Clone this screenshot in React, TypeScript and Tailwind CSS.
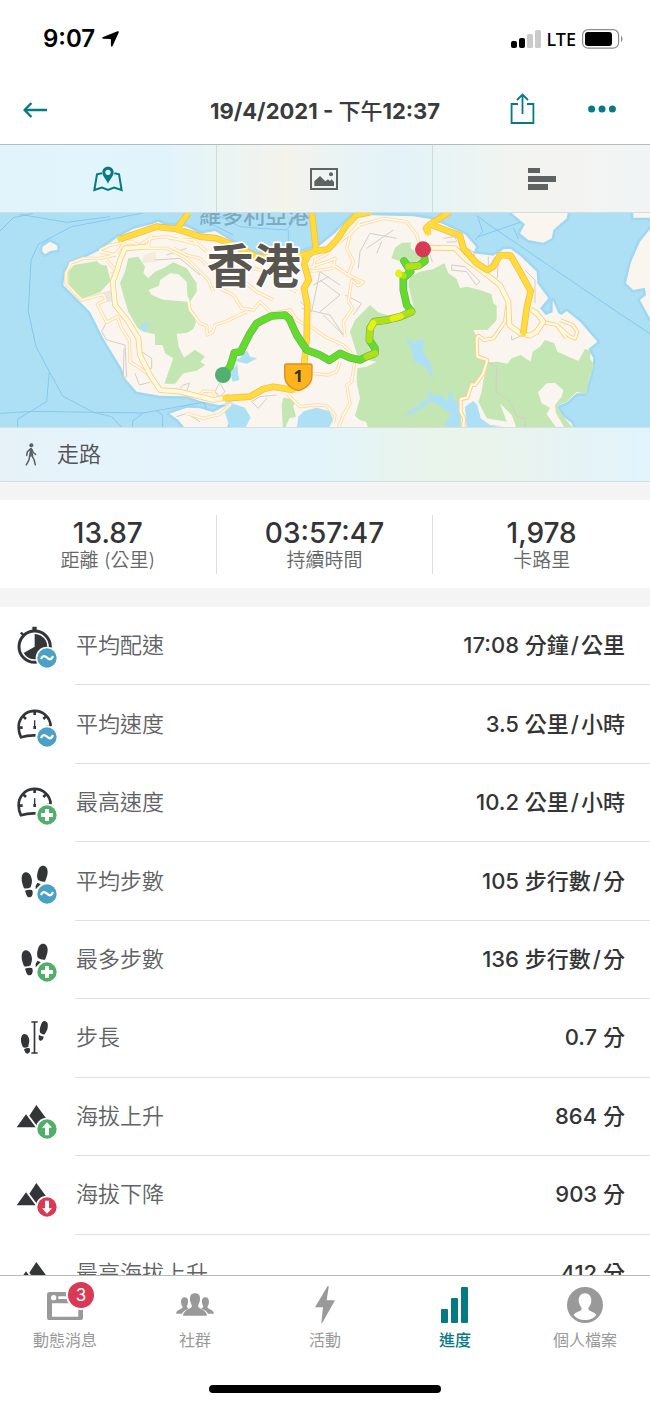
import { Fragment } from 'react'
import type { ReactNode } from 'react'

const INK = '#333638'

const LAND =
  'M210 175 250 160 300 135 355 95 400 72 455 58 475 50 495 60 560 65 600 86 645 78 700 112 760 150 900 142 955 125 1005 85 1040 48 1068 24 1080 30 1240 34 1290 42 1330 58 1395 88 1428 125 1420 145 1480 152 1512 132 1532 132 1560 152 1610 200 1612 235 1645 280 1620 310 1637 330 1658 322 1658 286 1675 325 1685 330 1700 318 1740 350 1792 410 1765 432 1780 460 1772 510 1755 565 1730 565 1700 592 1670 604 1690 635 1715 655 1720 670 700 670 680 640 690 600 655 600 600 588 560 574 480 572 410 560 375 520 365 490 310 400 270 320 240 290 190 240 195 200Z'

const PARKS = [
  'M205 200 222 180 270 172 290 168 300 178 320 182 332 228 300 262 250 280 225 265 205 240Z',
  'M385 160 415 155 435 185 430 205 445 220 465 200 490 190 520 172 560 190 590 235 590 260 570 290 562 270 560 230 535 207 510 205 480 225 477 242 445 255 455 270 490 284 560 290 580 320 588 352 580 372 560 384 530 386 536 425 552 458 585 434 615 455 600 470 615 480 590 497 550 505 525 536 493 536 520 460 495 445 488 420 465 420 465 388 430 380 412 368 385 320 370 270 360 235 375 200Z',
  'M1174 160 1185 128 1205 114 1232 112 1232 130 1272 155 1240 175 1200 168Z',
  'M1225 240 1230 215 1260 200 1300 192 1333 175 1345 205 1370 222 1380 250 1400 245 1440 255 1475 268 1480 295 1490 302 1490 345 1462 375 1420 375 1430 395 1432 455 1465 470 1450 510 1420 545 1398 578 1380 582 1385 670 1105 670 1098 650 1080 646 1065 632 1080 580 1070 530 1072 490 1100 485 1130 470 1075 460 1050 380 1065 345 1110 300 1135 322 1160 330 1185 342 1220 335 1242 310Z',
  'M1465 472 1490 470 1522 476 1535 460 1562 450 1592 470 1598 440 1620 425 1635 405 1663 415 1672 440 1735 468 1755 432 1772 438 1770 460 1782 482 1765 530 1760 568 1730 560 1700 590 1670 602 1690 635 1720 670 1550 670 1535 630 1500 595 1520 650 1460 640 1435 590 1445 560 1450 525Z',
  'M845 600 850 578 885 582 880 605 888 635 868 640 855 670 848 665Z',
]

const WATER = [
  'M418 362 430 357 452 352 442 364 438 382 422 372Z',
  'M700 465 720 460 732 440 742 438 750 455 772 460 740 476 715 470Z',
  'M690 500 712 478 714 505 718 525 698 530Z',
  'M674 620 700 596 735 608 752 638 735 670 690 670Z',
  'M895 635 912 618 950 608 988 618 1000 645 985 670 890 670Z',
  'M1215 402 1232 405 1240 418 1252 404 1272 406 1268 440 1292 475 1298 510 1302 530 1290 505 1268 480 1242 470 1235 435Z',
  'M1214 637 1235 610 1262 602 1258 580 1266 592 1282 584 1290 552 1300 575 1322 568 1340 590 1352 555 1362 585 1380 600 1380 670 1330 660 1355 630 1315 598 1290 592 1262 612Z',
  'M1395 605 1420 588 1432 600 1442 640 1470 660 1510 664 1400 670Z',
]

const SMALL_ROADS = [
  'M300 135 330 120 360 115 380 110 420 120 450 100 500 95 560 110 600 120',
  'M210 175 250 160 300 160 345 150 370 118 400 110 M300 140 350 150 M320 165 350 200 330 210',
  'M210 180 198 205 198 235 245 285 310 268 318 285 292 298 320 352 352 335 365 370 388 405 390 470 450 510 480 555',
  'M375 105 420 120 450 130 500 130 520 140 560 160 600 200 625 225 640 260',
  'M455 90 445 120 M520 130 560 150 600 160 640 200 M505 100 580 105 620 140',
  'M640 240 700 270 725 310 760 315 780 290 815 325 870 315 890 345 940 370 975 395 1030 420 1055 445',
  'M565 290 570 315 600 355 620 362 622 390 638 382 645 360 680 348 740 320',
  'M630 195 680 215 700 240 740 235 770 260 820 285 M700 130 760 190 800 200 850 240 890 260',
  'M920 190 980 170 1005 160 1000 190 925 200 M940 190 945 165 985 145',
  'M1000 180 1045 210 1090 232 1075 242 1055 226 1045 290 1058 310 1030 350 1035 395',
  'M1080 50 1050 90 1040 130 1060 170 1045 210 M1020 110 1080 60 1150 40 1220 50 1250 90 1260 125',
  'M935 505 985 510 1010 500 1020 470 M1065 465 1055 530 1040 540 1050 595 1030 630 1015 670',
  'M860 565 900 605 950 600 980 602 1005 630 1000 655',
  'M560 625 610 640 660 628 690 600 M600 570 610 558 640 560 650 580',
]

const MAIN_ROADS = [
  'M440 125 375 130 360 165 350 200 338 230 345 300 385 350 415 400 420 450 450 510 480 555 540 560 640 585 690 575',
  'M1290 128 1365 130 1400 165 1455 205 1500 240 1525 290 1528 360 1560 385 1590 392 1610 380 1630 350 1610 325 1592 312',
]

const SIDE_ROADS = [
  'M1522 300 1515 350 1480 400 1452 405 1435 392 1430 400 1432 455 1462 465 1450 505 1425 540 1415 538 1402 578 1382 582 1382 620 1392 640 1390 670',
  'M1630 352 1670 360 1710 395 1725 400 1732 380 1718 360 1680 345 M1670 360 1700 400',
]

const HIGHWAYS = [
  'M360 102 420 82 470 65 530 72 600 95 650 100 700 120 770 155 860 160 910 150 940 140 985 132 1010 105 1040 60 1070 30',
  'M935 20 942 80 948 135 925 150 912 175 926 225 912 250 922 300 920 400 912 480',
  'M1350 20 1290 58 1380 92 1390 130 1430 175 1462 195 1480 185 1500 150 1532 152 1560 200 1592 258 1580 310 1570 385',
  'M675 580 750 575 790 552 820 545 880 555',
  'M1290 58 1278 70 1285 84 M1070 30 1110 22 M530 72 565 24',
]

const PATHS =
  'M465 165 540 160 600 210 M500 150 560 130 M900 290 935 320 960 200 1020 240 M905 310 990 330 1030 390 M960 320 1020 270 960 225 M940 240 985 215 M1075 190 1080 140 1110 85 1190 100 M1100 130 1180 75 M1145 110 1130 145 M1035 270 1085 295 1060 330 M970 330 1035 395 M305 380 320 405 375 420 380 515 370 520 372 430 M305 380 320 350 M425 440 455 460 455 490 440 490 M405 505 418 540 450 532 M540 550 550 540 568 535 560 560 M658 535 645 560 660 575 675 560 660 535 M755 590 780 575 830 570 M755 590 775 610 800 580 M1290 150 1297 170 M1355 180 1395 185 1440 230 1428 240 1400 200 1355 195 1355 180 M1465 155 1465 190 1485 155 M1495 160 1492 220 M1575 195 1605 225 1605 295 M1535 392 1535 405 1570 390 M1460 470 1490 485 1488 560 1530 590 1550 635 1575 640 1575 670 M530 635 560 625 600 650 M1400 130 1420 140 1425 160 M1330 100 1365 95 1370 110 1340 112'

const FERRIES =
  'M0 78 40 38 100 25 M60 28 200 52 330 35 M430 24 215 65 115 118 93 165 85 320 108 425 148 500 188 573 280 622 335 635 368 670 M148 500 140 590 53 642 53 670 M0 625 100 619 430 624 620 590 M430 624 398 648 398 670 M470 618 488 630 488 670 M600 40 700 90 M640 24 720 65 780 70 860 75 900 24 M865 75 865 130 M1430 32 1480 68 1850 320 1950 386 M1435 40 1448 80 1425 105 M1435 95 1560 52 M1540 68 1555 102 M610 590 620 615'

const ROUTE =
  'M68 510 90 485 98 460 103 443 122 440 150 385 170 355 195 342 215 333 255 330 268 342 290 390 320 435 360 450 388 466 420 445 450 458 480 465 500 455 525 445 525 430 508 405 510 370 522 350 560 345 600 335 635 320 620 300 610 255 610 220 632 200 612 168 625 185 655 182 675 168 670 133'

function Casing({ roads, width, edge, fill }: { roads: string[]; width: number; edge: string; fill: string }) {
  return (
    <g fill="none" strokeLinejoin="round">
      <path d={roads.join(' ')} stroke={edge} strokeWidth={width + 5} />
      <path d={roads.join(' ')} stroke={fill} strokeWidth={width} strokeLinecap="square" />
    </g>
  )
}

function RouteMap() {
  return (
    <svg viewBox="0 24 1950 642" className="block w-full bg-[#ade0f5]" role="img" aria-label="香港">
      <path d={FERRIES} fill="none" stroke="#86c8f2" strokeWidth="3" />
      <g fill="#faf5ef" stroke="#8fcdeb" strokeOpacity=".4" strokeWidth="16" strokeLinejoin="round" paintOrder="stroke">
        <path d={LAND} />
        <path d="M128 125 150 110 172 122 172 134 150 138 135 148 126 138Z" />
        <path d="M508 626 560 608 600 610 640 622 690 595 700 615 680 670 555 670 535 645Z" />
        <path d="M1535 24 1575 58 1560 85 1585 105 1630 113 1655 100 1660 75 1700 40 1705 15 1540 15Z" />
        <path d="M1900 15 1900 38 1950 38 1960 60 1920 110 1900 155 1892 175 1878 235 1900 255 1935 248 1938 270 1920 285 1950 340 1970 340 1970 15Z" />
      </g>
      <path d="M430 150 468 138 468 170 425 175Z" fill="#f5ecdc" />
      <path d="M310 262 335 255 345 290 318 290Z" fill="#e9e7e6" />
      <g fill="#c3e6b2">
        {PARKS.map((d) => (
          <path key={d} d={d} />
        ))}
      </g>
      <path
        d="M1640 535 1665 534 1690 555 1685 575 1665 600 1668 625 1695 670 1670 670 1640 628 1650 608 1625 595 1614 562Z"
        fill="#faf5ef"
      />
      <g fill="#ade0f5">
        {WATER.map((d) => (
          <path key={d} d={d} />
        ))}
      </g>
      <path d={PATHS} fill="none" stroke="#d3cec8" strokeWidth="3" />
      <Casing roads={SMALL_ROADS} width={5} edge="#fbd9b0" fill="#fffbdc" />
      <Casing roads={SIDE_ROADS} width={7} edge="#fac996" fill="#fffbd6" />
      <Casing roads={MAIN_ROADS} width={12} edge="#fac996" fill="#fffbd6" />
      <Casing roads={HIGHWAYS} width={15} edge="#f9b95c" fill="#ffdd38" />

      <g className="font-['Noto_Sans_CJK_TC',sans-serif]" paintOrder="stroke" strokeLinejoin="round">
        <text x="598" y="55" fontSize="66" fontWeight="500" fill="#7eabc0">
          維多利亞港
        </text>
        <text x="620" y="233" fontSize="141" fontWeight="700" fill="#59554f" stroke="#fff" strokeWidth="10">
          香港
        </text>
      </g>

      <g transform="translate(600 0)" fill="none" strokeLinejoin="round" strokeLinecap="round">
        <path d={ROUTE} stroke="#79a860" strokeWidth="23" />
        <path d={ROUTE} stroke="#61dc2b" strokeWidth="19" />
        <path
          d="M500 455 525 445M508 405 510 370 522 350 560 345 600 335 635 320M625 185 655 182M596 206 610 212"
          stroke="#b0e015"
          strokeWidth="19"
        />
        <path d="M512 368 520 354M578 341 602 334M596 203 598 209" stroke="#e6f012" strokeWidth="18" />
      </g>
      <path
        d="M854 482Q854 477 860 477H930Q936 477 936 482V510Q936 545 895 557 854 545 854 510Z"
        fill="#ffb31c"
        stroke="#d99023"
        strokeWidth="4"
      />
      <text x="895" y="531" fontSize="50" fontWeight="700" textAnchor="middle" fill="#333" className="font-['Noto_Sans']">
        1
      </text>
      <circle cx="669" cy="510" r="24" fill="#51b06f" />
      <circle cx="1269" cy="133" r="24" fill="#d93954" />
    </svg>
  )
}

function StatusBar() {
  return (
    <div className="flex h-[78px] shrink-0 items-center justify-between pl-[43px] pr-[27px] text-black">
      <div className="flex items-center gap-[7px]">
        <span className="font-['Inter'] text-[24px] font-semibold">9:07</span>
        <svg width="17" height="16" viewBox="0 0 17 16">
          <path d="M15.500.3Q17.300-.2 16.700 1.500L10.700 14.800Q9.400 16.600 8.900 14.600V8.400Q8.900 8 8.500 8L1.200 7.800Q-.8 7.200 1.100 6.100Z" />
        </svg>
      </div>
      <div className="flex items-center gap-[6px]">
        <svg width="30" height="18" viewBox="0 0 30 18">
          <rect y="11" width="6" height="7" rx="2" />
          <rect x="8" y="8" width="6" height="10" rx="2" />
          <rect x="16" y="4" width="6" height="14" rx="1.5" fill="#cbcbcb" />
          <rect x="24" width="6" height="18" rx="1.5" fill="#cbcbcb" />
        </svg>
        <span className="font-['Noto_Sans'] text-[18px] font-medium leading-5">LTE</span>
        <svg width="41" height="20" viewBox="0 0 41 20">
          <rect x=".6" y=".6" width="36" height="18.6" rx="5.5" fill="none" stroke="#8c8c8c" strokeWidth="1.2" />
          <rect x="3" y="3" width="27" height="14" rx="3" />
          <path d="M39 6.5Q42 10 39 13.5Z" fill="#8c8c8c" />
        </svg>
      </div>
    </div>
  )
}

function Header() {
  return (
    <header className="grid h-[66px] shrink-0 grid-cols-[1fr_auto_1fr] items-center pl-[23px] pr-[34px] text-[#057a82]">
      <button aria-label="返回" className="justify-self-start pb-[2px]">
        <svg width="24" height="16" viewBox="0 0 24 16" fill="none" stroke="currentColor" strokeWidth="2.400">
          <path d="M24 8H2M8.400 1 1.600 8l6.800 7" />
        </svg>
      </button>
      <h1 className="pl-[11px] font-['Inter','Noto_Sans_CJK_TC',sans-serif] text-[22px] font-bold text-[#3a3b3c]">
        19/4/2021 - <span className="font-medium">下午</span>12:37
      </h1>
      <div className="flex items-center justify-end gap-[53px] pb-1">
        <button aria-label="分享">
          <svg width="25" height="32" viewBox="0 0 25 32" fill="none" stroke="currentColor" strokeWidth="1.800">
            <path d="M8 11H1.600v19h21.800V11H17M12.500 21V2M7 7 12.500 1.600 18 7" />
          </svg>
        </button>
        <button aria-label="更多">
          <svg width="28" height="8" viewBox="0 0 28 8" fill="currentColor">
            <circle cx="3.600" cy="4" r="3.500" />
            <circle cx="14" cy="4" r="3.500" />
            <circle cx="24.400" cy="4" r="3.500" />
          </svg>
        </button>
      </div>
    </header>
  )
}

function ViewTabs() {
  return (
    <div className="grid h-[69px] shrink-0 grid-cols-3 divide-x divide-[#d0dcdc] border-b border-t border-b-[#cfdfe2] border-t-[#b5bcbe] bg-[linear-gradient(90deg,#e1f4fc_0%,#e2f4fb_26%,#eaf4f3_34%,#f4f3ec_44%,#e8f3f5_54%,#e3f3f9_62%,#e9f4f3_70%,#f3f4ef_80%,#f3f4f2_90%,#f0f4f5_100%)]">
      <button aria-label="地圖" className="grid place-items-center text-[#057a82]">
        <svg width="30" height="26" viewBox="0 0 90 78" fill="none" stroke="currentColor" strokeWidth="6">
          <path d="M27 22 12 25 4 72 27 65 45 72 63 65 86 72 78 25 64 22" />
          <path
            d="M45 2C34 2 28 10 28 19c0 12 11 20 17 34 6-14 17-22 17-34C62 10 56 2 45 2Zm0 9a8 8 0 1 1 0 16 8 8 0 0 1 0-16Z"
            fill="currentColor"
            stroke="none"
          />
        </svg>
      </button>
      <button aria-label="相片" className="grid place-items-center text-[#5f6263]">
        <svg width="28" height="22" viewBox="0 0 84 66" fill="currentColor">
          <path d="M0 0H84V66H0ZM6 6V60H78V6Z" fillRule="evenodd" />
          <path d="M13 54V40L30 24 46 40 54 34 60 39 65 34 72 42V54Z" />
          <circle cx="63" cy="19" r="6" />
        </svg>
      </button>
      <button aria-label="圖表" className="grid place-items-center text-[#5f6263]">
        <svg width="28" height="22" viewBox="0 0 28 22" fill="currentColor">
          <path d="M0 0h12v5H0zM0 8h28v6H0zM0 16h20v6H0z" />
        </svg>
      </button>
    </div>
  )
}

function ActivityType() {
  return (
    <div className="flex h-[55px] shrink-0 items-center gap-[20px] border-y border-[#d3e1e5] bg-[linear-gradient(90deg,#e6f2f8_0%,#e4f4fc_30%,#e3f4fa_50%,#e9f4ea_66%,#eaf4ec_76%,#e7f3f3_86%,#e1f4fd_100%)] pl-[25px]">
      <svg width="12" height="23" viewBox="0 0 36 68" fill="none" stroke="#5b5e5f" strokeLinecap="round" strokeLinejoin="round">
        <circle cx="19" cy="6" r="6" fill="#5b5e5f" stroke="none" />
        <path d="M18 17 15 38M18 17 22 38" strokeWidth="6" />
        <path d="M15 18 7 26 5 37M20 18 25 28 32 34M14 38 12 50 4 65M21 38 27 49 31 65" strokeWidth="4.500" />
      </svg>
      <span className="text-[22px] font-[350] text-[#515456]">走路</span>
    </div>
  )
}

const summary = [
  { value: '13.87', label: '距離 (公里)' },
  { value: '03:57:47', label: '持續時間' },
  { value: '1,978', label: '卡路里' },
]

function Summary() {
  return (
    <dl className="grid h-[88px] shrink-0 grid-cols-3 divide-x divide-[#dedede] bg-white pb-[14px] pt-[15px] text-center">
      {summary.map((s) => (
        <div key={s.label} className="flex flex-col-reverse justify-end pt-[3px]">
          <dt className="text-[19px] font-[350] leading-[26px] text-[#646667]">{s.label}</dt>
          <dd className="text-[28px] font-medium leading-[30px] text-[#333435]">{s.value}</dd>
        </div>
      ))}
    </dl>
  )
}

type BadgeKind = 'average' | 'max' | 'up' | 'down'

const badgeColor = { average: '#4ba0c7', max: '#50b069', up: '#50b069', down: '#d93954' }

const badgeGlyph = {
  average: <path d="M75 111C80 99 86 101 93 107S106 115 111 102" fill="none" stroke="#fff" strokeWidth="7" />,
  max: <path d="M87 90H99V102H111V114H99V126H87V114H75V102H87Z" fill="#fff" />,
  up: <path d="M93 88 108 104H99V127H87V104H78Z" fill="#fff" />,
  down: <path d="M93 128 108 112H99V89H87V112H78Z" fill="#fff" />,
}

function MetricIcon({ badge, children }: { badge?: BadgeKind; children: ReactNode }) {
  return (
    <svg width="42" height="46" viewBox="0 3 126 138" fill={INK} className="shrink-0" aria-hidden="true">
      {children}
      {badge && (
        <>
          <circle cx="93" cy="108" r="34" fill="#fff" />
          <circle cx="93" cy="108" r="29" fill={badgeColor[badge]} />
          {badgeGlyph[badge]}
        </>
      )}
    </svg>
  )
}

const stopwatch = (
  <>
    <circle cx="56" cy="74" r="47" fill="none" stroke={INK} strokeWidth="9" />
    <path d="M49 14H62V26H49ZM12 34 17 29 25 37 20 42ZM56 74V36A38 38 0 1 1 23 93Z" />
  </>
)

const gauge = (
  <>
    <path
      d="M59 103Q35 102 15 109 8 95 8 80A48 48 0 0 1 104 75M56 32V42M8 80H20M22 46 30 54M90 46 82 54M104 78H92"
      fill="none"
      stroke={INK}
      strokeWidth="8"
      strokeLinejoin="round"
    />
    <path d="M54 58H58V75H60V84H52V75H54Z" />
  </>
)

const footprints = (
  <>
    <path d="M30 43C40 43 47 55 48 68C48 76 45 83 44 88Q35 93 24 91C20 80 17 72 17 62C17 50 22 43 30 43Z" />
    <path d="M27 98Q38 93 48 96C53 104 49 117 42 118C33 119 31 109 27 98Z" />
    <path d="M81 23C90 23 95 31 95 42C95 52 91 61 87 71Q77 73 66 66C62 58 63 50 65 43C67 31 73 23 81 23Z" />
    <path d="M64 74 75 79 59 94Q57 82 64 74Z" />
  </>
)

const stride = (
  <>
    <path d="M25 60C34 60 40 70 40 81 39 88 37 93 37 98Q29 103 21 100C17 91 14 83 15 74 16 66 20 60 25 60Z" />
    <path d="M24 106Q33 100 41 103C44 111 41 119 34 119 28 119 26 112 24 106Z" />
    <path d="M86 21C94 22 97 30 95 41 94 49 89 55 86 61Q79 62 73 57C70 50 71 43 74 35 76 26 80 21 86 21Z" />
    <path d="M69 62Q76 68 83 67C83 75 79 81 73 80 67 78 67 70 69 62Z" />
    <path d="M46 22H65V26H58V115H65V119H46V115H53V26H46Z" />
  </>
)

const mountains = <path d="M2 103 30 64 59 103ZM61 36 92 78 66 103 40 68Z" />

const metrics: { icon: ReactNode; badge?: BadgeKind; label: string; value: string }[] = [
  { icon: stopwatch, badge: 'average', label: '平均配速', value: '17:08 分鐘/公里' },
  { icon: gauge, badge: 'average', label: '平均速度', value: '3.5 公里/小時' },
  { icon: gauge, badge: 'max', label: '最高速度', value: '10.2 公里/小時' },
  { icon: footprints, badge: 'average', label: '平均步數', value: '105 步行數/分' },
  { icon: footprints, badge: 'max', label: '最多步數', value: '136 步行數/分' },
  { icon: stride, label: '步長', value: '0.7 分' },
  { icon: mountains, badge: 'up', label: '海拔上升', value: '864 分' },
  { icon: mountains, badge: 'down', label: '海拔下降', value: '903 分' },
  { icon: mountains, badge: 'up', label: '最高海拔上升', value: '412 分' },
]

function MetricValue({ value }: { value: string }) {
  return value.split('/').map((part, i) => (
    <Fragment key={part}>
      {i > 0 && <span className="px-[2px]">/</span>}
      {part}
    </Fragment>
  ))
}

function Metrics() {
  return (
    <dl className="grid h-[706px] auto-rows-fr bg-white">
      {metrics.map((m) => (
        <div key={m.label} className="flex items-center gap-[17px] pl-4">
          <MetricIcon badge={m.badge}>{m.icon}</MetricIcon>
          <div className="flex h-full flex-1 items-center justify-between border-b border-[#e0e0e0] pl-px pr-[25px] text-[22px]">
            <dt className="font-[350] text-[#606263]">{m.label}</dt>
            <dd className="font-medium text-[#333435]">
              <MetricValue value={m.value} />
            </dd>
          </div>
        </div>
      ))}
    </dl>
  )
}

const navItems = [
  {
    label: '動態消息',
    count: 3,
    icon: (
      <svg width="36" height="38" viewBox="0 0 108 114" fill="currentColor">
        <path d="M8 18H56Q58 42 72 52H15V92H94V68H108V96Q108 102 102 102H8Q0 102 0 95V26Q0 18 8 18Z" />
        <circle cx="20" cy="35" r="8" fill="#fff" />
        <path d="M34 31H56L60 39H34Z" fill="#fff" />
      </svg>
    ),
  },
  {
    label: '社群',
    icon: (
      <svg width="38" height="38" viewBox="0 0 114 114" fill="currentColor">
        <path d="M57 22C67 22 73 28 72 40 72 48 68 54 66 60 67 69 91 70 93 89H21C23 70 47 69 48 60 46 54 42 48 42 40 41 28 47 22 57 22Z" />
        <path d="M26 34C33 34 37 39 36 47 36 53 34 58 32 61 33 66 37 66 38 68 28 72 20 77 18 83H0C2 70 19 70 20 63 17 57 15 53 15 47 15 39 19 34 26 34Z" />
        <path d="M88 34C81 34 77 39 78 47 78 53 80 58 82 61 81 66 77 66 76 68 86 72 94 77 96 83H114C112 70 95 70 94 63 97 57 99 53 99 47 99 39 95 34 88 34Z" />
      </svg>
    ),
  },
  {
    label: '活動',
    icon: (
      <svg width="20" height="38" viewBox="0 0 60 114" fill="currentColor">
        <path d="M38 0 0 64H24L19 110Q19 114 22 110L60 43H35L41 3Q41-2 38 0Z" />
      </svg>
    ),
  },
  {
    label: '進度',
    active: true,
    icon: (
      <svg width="28" height="38" viewBox="0 0 28 38" fill="currentColor">
        <rect y="23" width="7" height="14" rx="1" />
        <rect x="10" y="12" width="7" height="25" rx="1" />
        <rect x="20" y="1" width="7" height="36" rx="1" />
      </svg>
    ),
  },
  {
    label: '個人檔案',
    icon: (
      <svg width="36" height="38" viewBox="0 0 108 114">
        <circle cx="54" cy="57" r="54" fill="currentColor" />
        <path
          d="M54 22C66 22 74 32 73 46 72 55 68 60 64 66 62 77 84 77 88 87 80 98 67 102 54 102S28 98 20 87C24 77 46 77 44 66 40 60 36 55 35 46 34 32 42 22 54 22Z"
          fill="#fff"
        />
      </svg>
    ),
  },
]

function BottomNav() {
  return (
    <nav className="shrink-0 border-t border-[#b9b9b9] bg-white pb-[13px] pt-[10px]">
      <div className="grid grid-cols-5">
        {navItems.map((item) => (
          <a
            key={item.label}
            href="#"
            className={`flex flex-col items-center gap-1 text-[16px] leading-6 ${item.active ? 'font-medium text-[#057a82]' : 'text-[#999999]'}`}
          >
            <span className="relative">
              {item.icon}
              {item.count && (
                <span className="absolute -right-[13px] -top-[6px] grid h-[30px] w-[30px] place-items-center rounded-full border-2 border-white bg-[#d93954] text-[17px] leading-5 text-white">
                  {item.count}
                </span>
              )}
            </span>
            {item.label}
          </a>
        ))}
      </div>
      <div className="mx-auto mt-[33px] h-2 w-[232px] rounded-full bg-black" />
    </nav>
  )
}

export default function App() {
  return (
    <div className="flex h-screen flex-col overflow-hidden bg-white font-['Inter','Noto_Sans_CJK_TC',sans-serif]">
      <StatusBar />
      <Header />
      <ViewTabs />
      <main className="min-h-0 flex-1 overflow-hidden bg-[#f4f4f4]">
        <RouteMap />
        <ActivityType />
        <div className="pb-[19px] pt-[18px]">
          <Summary />
        </div>
        <Metrics />
      </main>
      <BottomNav />
    </div>
  )
}
